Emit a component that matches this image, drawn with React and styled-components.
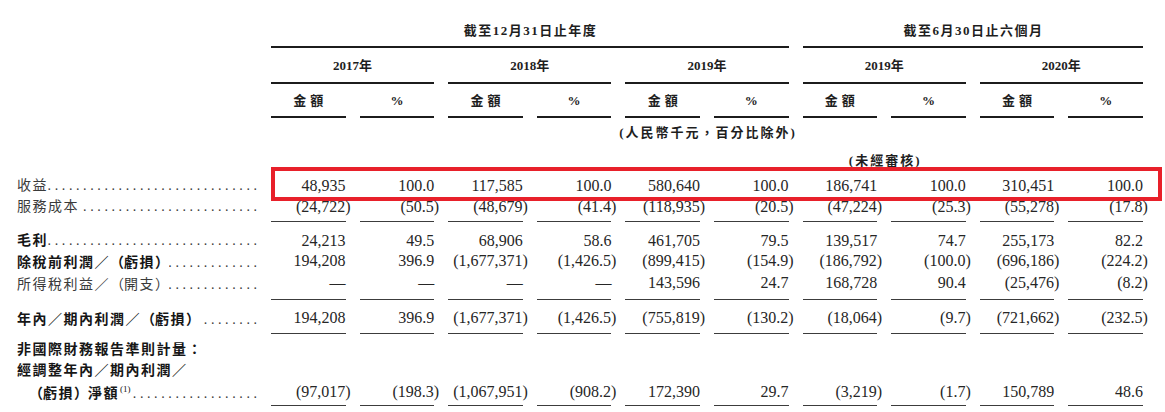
import React from "react";
import styled, { createGlobalStyle, css } from "styled-components";

const GlobalStyle = createGlobalStyle`
  html, body { margin: 0; padding: 0; background: #ffffff; }
  body { font-family: "Liberation Serif", "Noto Sans CJK TC", serif; }
`;

const gridCols = css`
  display: grid;
  grid-template-columns: 240px repeat(10, 74.6px);
  column-gap: 14px;
`;

const Page = styled.div`
  width: 1165px;
  box-sizing: border-box;
  padding: 20px 0 0 17px;
  color: #222;
`;

const Row = styled.div`
  ${gridCols};
  position: relative;
  padding-top: ${(p) => p.$top || 0}px;
`;

const HeadCell = styled.div`
  grid-column: ${(p) => p.$col};
  font-family: "Liberation Serif", "Noto Sans CJK TC", serif;
  font-weight: 700;
  font-size: 13px;
  line-height: 22px;
  text-align: center;
  letter-spacing: ${(p) => p.$ls ?? 1.5}px;
  padding-left: ${(p) => p.$ls ?? 1.5}px;
  padding-bottom: ${(p) => p.$pb || 0}px;
  color: #1e1e1e;
  white-space: nowrap;
  ${(p) => p.$rule && css`border-bottom: 2px solid #1c1c1c;`}
`;

const LabelCell = styled.div`
  grid-column: 1;
  display: flex;
  align-items: baseline;
  min-width: 0;
  padding-left: ${(p) => p.$indent || 0}px;
  font-family: "Liberation Serif", "Noto Sans CJK TC", serif;
  font-size: 14px;
  line-height: 20px;
  letter-spacing: 1.5px;
  font-weight: ${(p) => (p.$bold ? 700 : 400)};
  color: ${(p) => (p.$bold ? "#161616" : "#3a3a3a")};
  white-space: nowrap;
`;

const LabelText = styled.span`
  flex: none;
`;

const Paren = styled.span`
  font-family: "Noto Sans CJK JP", sans-serif;
  letter-spacing: 0;
`;

const Sup = styled.sup`
  font-size: 9px;
  font-weight: 400;
  letter-spacing: 0;
  vertical-align: 6px;
  line-height: 0;
  margin-left: 1px;
`;

const Leader = styled.span`
  flex: 1;
  min-width: 0;
  overflow: hidden;
  display: flex;
  justify-content: flex-end;
  padding-left: 3px;
  font-weight: 400;
  color: #3a3a3a;
  letter-spacing: 3.6px;
  margin-right: -3.6px;
`;

const ValueCell = styled.div`
  display: flex;
  justify-content: flex-end;
  font-family: "Liberation Serif", serif;
  font-size: 16px;
  line-height: 20px;
  color: #262626;
  padding-bottom: ${(p) => p.$pb || 0}px;
  ${(p) => p.$rule && css`border-bottom: 1px solid #3c3c3c;`}
`;

const Num = styled.span`
  white-space: nowrap;
  margin-right: ${(p) => (p.$neg ? -5 : 0)}px;
`;

const Highlight = styled.div`
  position: absolute;
  left: 254px;
  top: -5px;
  width: 891px;
  height: 34px;
  box-sizing: border-box;
  border: 4px solid #e8202a;
  pointer-events: none;
`;

const DOTS = ".".repeat(60);

function withParens(text) {
  return text.split(/([（）])/).map((part, i) =>
    part === "（" || part === "）" ? <Paren key={i}>{part}</Paren> : part
  );
}

const rows = [
  {
    label: "收益",
    vals: ["48,935", "100.0", "117,585", "100.0", "580,640", "100.0", "186,741", "100.0", "310,451", "100.0"],
    top: 4,
    highlight: true,
  },
  {
    label: "服務成本",
    vals: ["(24,722)", "(50.5)", "(48,679)", "(41.4)", "(118,935)", "(20.5)", "(47,224)", "(25.3)", "(55,278)", "(17.8)"],
    top: 1,
    rule: true,
    pb: 4,
  },
  {
    label: "毛利",
    bold: true,
    vals: ["24,213", "49.5", "68,906", "58.6", "461,705", "79.5", "139,517", "74.7", "255,173", "82.2"],
    top: 9,
  },
  {
    label: "除稅前利潤／（虧損）",
    bold: true,
    vals: ["194,208", "396.9", "(1,677,371)", "(1,426.5)", "(899,415)", "(154.9)", "(186,792)", "(100.0)", "(696,186)", "(224.2)"],
    top: 0,
  },
  {
    label: "所得稅利益／（開支）",
    vals: ["—", "—", "—", "—", "143,596", "24.7", "168,728", "90.4", "(25,476)", "(8.2)"],
    top: 0,
    rule: true,
    pb: 6,
  },
  {
    label: "年內／期內利潤／（虧損）",
    bold: true,
    vals: ["194,208", "396.9", "(1,677,371)", "(1,426.5)", "(755,819)", "(130.2)", "(18,064)", "(9.7)", "(721,662)", "(232.5)"],
    top: 8,
    rule: true,
    pb: 5,
  },
  { label: "非國際財務報告準則計量：", bold: true, noLeader: true, top: 6 },
  { label: "經調整年內／期內利潤／", bold: true, noLeader: true, top: 1 },
  {
    label: "（虧損）淨額",
    sup: "(1)",
    indent: 12,
    bold: true,
    vals: ["(97,017)", "(198.3)", "(1,067,951)", "(908.2)", "172,390", "29.7", "(3,219)", "(1.7)", "150,789", "48.6"],
    top: 1,
    rule: true,
    pb: 3,
  },
];

const years = ["2017年", "2018年", "2019年", "2019年", "2020年"];

export default function App() {
  return (
    <>
      <GlobalStyle />
      <Page>
        <Row>
          <HeadCell $col="2 / span 6" $rule $pb={4}>
            截至12月31日止年度
          </HeadCell>
          <HeadCell $col="8 / span 4" $rule $pb={4}>
            截至6月30日止六個月
          </HeadCell>
        </Row>
        <Row $top={7}>
          {years.map((y, i) => (
            <HeadCell key={i} $col={`${2 + i * 2} / span 2`} $rule $pb={5} $ls={0}>
              {y}
            </HeadCell>
          ))}
        </Row>
        <Row $top={6}>
          {Array.from({ length: 10 }).map((_, i) => (
            <HeadCell key={i} $col={`${2 + i}`} $rule $pb={4} $ls={i % 2 === 0 ? 4 : 0}>
              {i % 2 === 0 ? "金額" : "%"}
            </HeadCell>
          ))}
        </Row>
        <Row $top={4}>
          <HeadCell $col="2 / span 10" $ls={2}>
            (人民幣千元，百分比除外)
          </HeadCell>
        </Row>
        <Row $top={6}>
          <HeadCell $col="8 / span 2" $ls={2}>
            (未經審核)
          </HeadCell>
        </Row>
        {rows.map((r, idx) => (
          <Row key={idx} $top={r.top}>
            <LabelCell $bold={r.bold} $indent={r.indent}>
              <LabelText>
                {withParens(r.label)}
                {r.sup && <Sup>{r.sup}</Sup>}
              </LabelText>
              {!r.noLeader && (
                <Leader>
                  <span>{DOTS}</span>
                </Leader>
              )}
            </LabelCell>
            {r.vals &&
              r.vals.map((v, i) => (
                <ValueCell key={i} $rule={r.rule} $pb={r.pb}>
                  <Num $neg={v.startsWith("(")}>{v}</Num>
                </ValueCell>
              ))}
            {r.highlight && <Highlight />}
          </Row>
        ))}
      </Page>
    </>
  );
}
